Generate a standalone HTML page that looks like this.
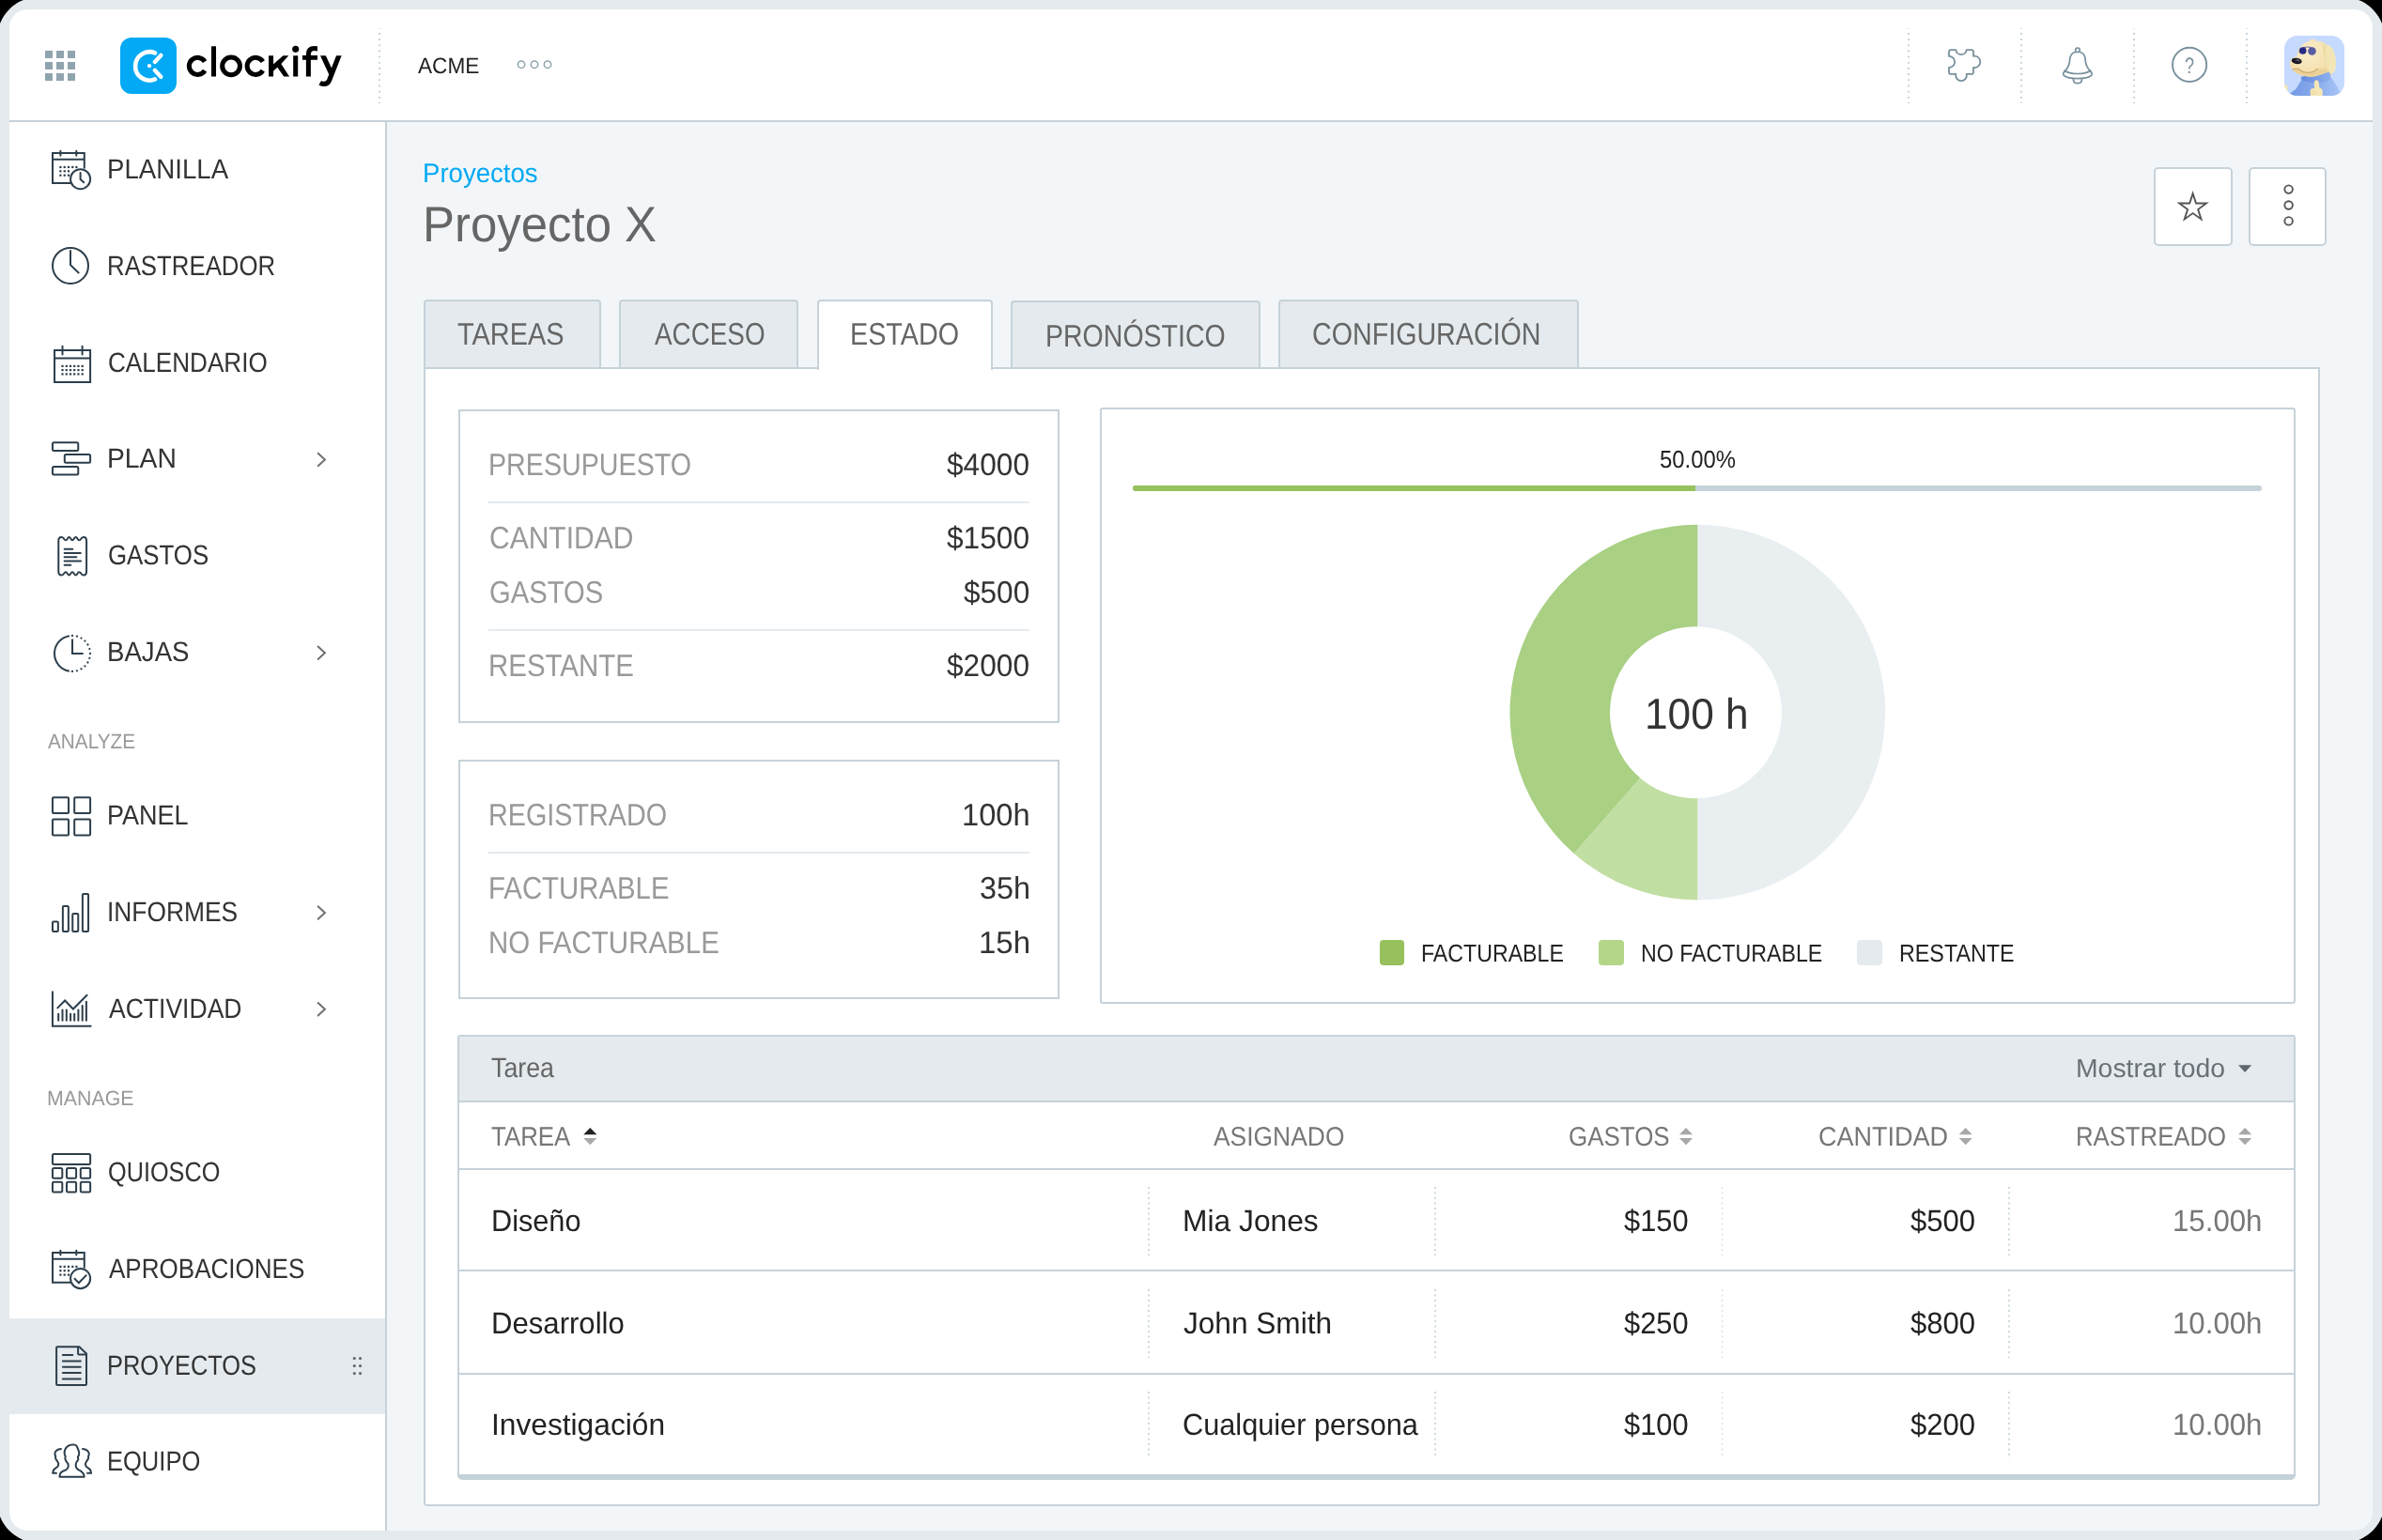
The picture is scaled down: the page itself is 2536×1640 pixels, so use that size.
<!DOCTYPE html>
<html><head><meta charset="utf-8"><title>Clockify</title>
<style>
html,body{margin:0;padding:0;background:#000;width:2536px;height:1640px;overflow:hidden}
body{width:2536px;height:1640px;position:relative;overflow:hidden;font-family:"Liberation Sans",sans-serif}
div,span,svg{position:absolute;display:block}
span{white-space:pre;transform-origin:0 0;text-rendering:geometricPrecision}
</style></head><body>
<div id="root" style="left:0;top:0;width:2536px;height:1640px;overflow:hidden;background:#000"><div style="left:-3px;top:-3px;width:2542px;height:1646px;background:#e4eaee;border-radius:44px"></div><div id="win" style="left:0;top:0;width:2536px;height:1640px;clip-path:inset(10px round 20px);background:#f2f6f8"><div style="left:10px;top:10px;width:2516px;height:118px;background:#fff"></div><div style="left:10px;top:128px;width:2516px;height:2px;background:#c6d2d9"></div><div style="left:10px;top:130px;width:400px;height:1500px;background:#fff"></div><div style="left:410.2px;top:130px;width:2px;height:1500px;background:#c6d2d9"></div><div style="left:10px;top:1403.8px;width:400.2px;height:102.1px;background:#e4eaee"></div><div style="left:48px;top:54px;width:8px;height:8px;background:#90a4ae"></div><div style="left:48px;top:66px;width:8px;height:8px;background:#90a4ae"></div><div style="left:48px;top:78px;width:8px;height:8px;background:#90a4ae"></div><div style="left:60px;top:54px;width:8px;height:8px;background:#90a4ae"></div><div style="left:60px;top:66px;width:8px;height:8px;background:#90a4ae"></div><div style="left:60px;top:78px;width:8px;height:8px;background:#90a4ae"></div><div style="left:72px;top:54px;width:8px;height:8px;background:#90a4ae"></div><div style="left:72px;top:66px;width:8px;height:8px;background:#90a4ae"></div><div style="left:72px;top:78px;width:8px;height:8px;background:#90a4ae"></div><div style="left:128px;top:40px;width:60px;height:60px;background:#03a9f4;border-radius:12px"></div><div style="left:403px;top:30px;width:2px;height:80px;background-image:linear-gradient(to bottom,#c3cfd8 0,#c3cfd8 2px,transparent 2px);background-size:2px 6.18px;background-position:0 -1.18px;background-repeat:repeat-y"></div><div style="left:2031px;top:30px;width:2px;height:80px;background-image:linear-gradient(to bottom,#c3cfd8 0,#c3cfd8 2px,transparent 2px);background-size:2px 6.18px;background-position:0 -1.18px;background-repeat:repeat-y"></div><div style="left:2151px;top:30px;width:2px;height:80px;background-image:linear-gradient(to bottom,#c3cfd8 0,#c3cfd8 2px,transparent 2px);background-size:2px 6.18px;background-position:0 -1.18px;background-repeat:repeat-y"></div><div style="left:2271px;top:30px;width:2px;height:80px;background-image:linear-gradient(to bottom,#c3cfd8 0,#c3cfd8 2px,transparent 2px);background-size:2px 6.18px;background-position:0 -1.18px;background-repeat:repeat-y"></div><div style="left:2391px;top:30px;width:2px;height:80px;background-image:linear-gradient(to bottom,#c3cfd8 0,#c3cfd8 2px,transparent 2px);background-size:2px 6.18px;background-position:0 -1.18px;background-repeat:repeat-y"></div><div style="left:2293px;top:177.5px;width:83.5px;height:84px;background:#fff;border:2px solid #c6d2d9;border-radius:5px;box-sizing:border-box"></div><div style="left:2393.7px;top:177.5px;width:83.5px;height:84px;background:#fff;border:2px solid #c6d2d9;border-radius:5px;box-sizing:border-box"></div><div style="left:450.6px;top:391.4px;width:2019.4px;height:1212.6px;background:#fff;border:2px solid #c6d2d9;box-sizing:border-box;border-radius:0 0 4px 4px"></div><div style="left:450.8px;top:319.1px;width:189.5px;height:74.3px;background:#e4eaee;border:2px solid #c6d2d9;box-sizing:border-box;border-radius:4px 4px 0 0"></div><div style="left:658.6px;top:319.1px;width:191.2px;height:74.3px;background:#e4eaee;border:2px solid #c6d2d9;box-sizing:border-box;border-radius:4px 4px 0 0"></div><div style="left:870.1px;top:319.1px;width:187.1px;height:74.5px;background:#fff;border:2px solid #c6d2d9;border-bottom:none;box-sizing:border-box;border-radius:4px 4px 0 0"></div><div style="left:1076.4px;top:320.3px;width:265.6px;height:73.1px;background:#e4eaee;border:2px solid #c6d2d9;box-sizing:border-box;border-radius:4px 4px 0 0"></div><div style="left:1360.5px;top:319.1px;width:320.5px;height:74.3px;background:#e4eaee;border:2px solid #c6d2d9;box-sizing:border-box;border-radius:4px 4px 0 0"></div><div style="left:488px;top:436px;width:640px;height:333.5px;background:#fff;border:2px solid #c6d2d9;box-sizing:border-box"></div><div style="left:488px;top:808.8px;width:640px;height:255.4px;background:#fff;border:2px solid #c6d2d9;box-sizing:border-box"></div><div style="left:1170.6px;top:434.4px;width:1273.4px;height:634.4px;background:#fff;border:2px solid #c6d2d9;box-sizing:border-box;border-radius:3px"></div><div style="left:520px;top:534px;width:576px;height:2px;background:#e4eaee"></div><div style="left:520px;top:670px;width:576px;height:2px;background:#e4eaee"></div><div style="left:520px;top:906.5px;width:576px;height:2px;background:#e4eaee"></div><div style="left:1206.4px;top:517.3px;width:1202px;height:6.2px;background:#c6d2d9;border-radius:3px"></div><div style="left:1206.4px;top:517.3px;width:598.2px;height:6.2px;background:#96c25e;border-radius:3px 0 0 3px"></div><div style="left:1468.7px;top:1001.2px;width:26.8px;height:26.6px;background:#96c15d;border-radius:4px"></div><div style="left:1702.1px;top:1001.2px;width:26.8px;height:26.6px;background:#b3d689;border-radius:4px"></div><div style="left:1977.2px;top:1001.2px;width:26.8px;height:26.6px;background:#e4eaee;border-radius:4px"></div><div style="left:487px;top:1102px;width:1957px;height:474px;background:#fff;border:2px solid #c6d2d9;border-bottom:6px solid #c6d2d9;box-sizing:border-box;border-radius:3px 3px 5px 5px"></div><div style="left:489px;top:1104px;width:1953px;height:68px;background:#e4eaee"></div><div style="left:489px;top:1172px;width:1953px;height:2px;background:#c6d2d9"></div><div style="left:489px;top:1244px;width:1953px;height:2px;background:#c6d2d9"></div><div style="left:489px;top:1352px;width:1953px;height:2px;background:#c6d2d9"></div><div style="left:489px;top:1462px;width:1953px;height:2px;background:#c6d2d9"></div><div style="left:1221.8px;top:1264px;width:1.8px;height:72.5px;background-image:linear-gradient(to bottom,#ccd7dd 0,#ccd7dd 1.7px,transparent 1.7px);background-size:1.8px 5.53px;background-position:0 0px;background-repeat:repeat-y"></div><div style="left:1527.3px;top:1264px;width:1.8px;height:72.5px;background-image:linear-gradient(to bottom,#ccd7dd 0,#ccd7dd 1.7px,transparent 1.7px);background-size:1.8px 5.53px;background-position:0 0px;background-repeat:repeat-y"></div><div style="left:1832.6px;top:1264px;width:1.8px;height:72.5px;background-image:linear-gradient(to bottom,#ccd7dd 0,#ccd7dd 1.7px,transparent 1.7px);background-size:1.8px 5.53px;background-position:0 0px;background-repeat:repeat-y"></div><div style="left:2138.1px;top:1264px;width:1.8px;height:72.5px;background-image:linear-gradient(to bottom,#ccd7dd 0,#ccd7dd 1.7px,transparent 1.7px);background-size:1.8px 5.53px;background-position:0 0px;background-repeat:repeat-y"></div><div style="left:1221.8px;top:1373px;width:1.8px;height:72.5px;background-image:linear-gradient(to bottom,#ccd7dd 0,#ccd7dd 1.7px,transparent 1.7px);background-size:1.8px 5.53px;background-position:0 0px;background-repeat:repeat-y"></div><div style="left:1527.3px;top:1373px;width:1.8px;height:72.5px;background-image:linear-gradient(to bottom,#ccd7dd 0,#ccd7dd 1.7px,transparent 1.7px);background-size:1.8px 5.53px;background-position:0 0px;background-repeat:repeat-y"></div><div style="left:1832.6px;top:1373px;width:1.8px;height:72.5px;background-image:linear-gradient(to bottom,#ccd7dd 0,#ccd7dd 1.7px,transparent 1.7px);background-size:1.8px 5.53px;background-position:0 0px;background-repeat:repeat-y"></div><div style="left:2138.1px;top:1373px;width:1.8px;height:72.5px;background-image:linear-gradient(to bottom,#ccd7dd 0,#ccd7dd 1.7px,transparent 1.7px);background-size:1.8px 5.53px;background-position:0 0px;background-repeat:repeat-y"></div><div style="left:1221.8px;top:1481.5px;width:1.8px;height:72.5px;background-image:linear-gradient(to bottom,#ccd7dd 0,#ccd7dd 1.7px,transparent 1.7px);background-size:1.8px 5.53px;background-position:0 0px;background-repeat:repeat-y"></div><div style="left:1527.3px;top:1481.5px;width:1.8px;height:72.5px;background-image:linear-gradient(to bottom,#ccd7dd 0,#ccd7dd 1.7px,transparent 1.7px);background-size:1.8px 5.53px;background-position:0 0px;background-repeat:repeat-y"></div><div style="left:1832.6px;top:1481.5px;width:1.8px;height:72.5px;background-image:linear-gradient(to bottom,#ccd7dd 0,#ccd7dd 1.7px,transparent 1.7px);background-size:1.8px 5.53px;background-position:0 0px;background-repeat:repeat-y"></div><div style="left:2138.1px;top:1481.5px;width:1.8px;height:72.5px;background-image:linear-gradient(to bottom,#ccd7dd 0,#ccd7dd 1.7px,transparent 1.7px);background-size:1.8px 5.53px;background-position:0 0px;background-repeat:repeat-y"></div><svg style="left:0;top:0" width="2536" height="1640" viewBox="0 0 2536 1640"><path d="M75.5,194.9 L56,194.9 L56,163 L89.8,163 L89.8,179.5" fill="none" stroke="#2d3e4b" stroke-width="2" stroke-linecap="butt" stroke-linejoin="miter"/><line x1="56" y1="169.8" x2="89.8" y2="169.8" stroke="#2d3e4b" stroke-width="2" stroke-linecap="butt"/><line x1="64.4" y1="160.8" x2="64.4" y2="165.7" stroke="#2d3e4b" stroke-width="2" stroke-linecap="round"/><line x1="81.3" y1="160.8" x2="81.3" y2="165.7" stroke="#2d3e4b" stroke-width="2" stroke-linecap="round"/><rect x="63.3" y="176.9" width="2.2" height="2.2" fill="#2d3e4b"/><rect x="67.6" y="176.9" width="2.2" height="2.2" fill="#2d3e4b"/><rect x="71.9" y="176.9" width="2.2" height="2.2" fill="#2d3e4b"/><rect x="76.2" y="176.9" width="2.2" height="2.2" fill="#2d3e4b"/><rect x="80.3" y="176.9" width="2.2" height="2.2" fill="#2d3e4b"/><rect x="63.3" y="181.2" width="2.2" height="2.2" fill="#2d3e4b"/><rect x="67.6" y="181.2" width="2.2" height="2.2" fill="#2d3e4b"/><rect x="71.9" y="181.2" width="2.2" height="2.2" fill="#2d3e4b"/><rect x="63.3" y="185.6" width="2.2" height="2.2" fill="#2d3e4b"/><rect x="67.6" y="185.6" width="2.2" height="2.2" fill="#2d3e4b"/><rect x="71.9" y="185.6" width="2.2" height="2.2" fill="#2d3e4b"/><circle cx="85.6" cy="190.7" r="10.55" fill="none" stroke="#2d3e4b" stroke-width="2"/><path d="M85.6,184.1 L85.6,190.9 L89.2,194.2" fill="none" stroke="#2d3e4b" stroke-width="2" stroke-linecap="round" stroke-linejoin="round"/><circle cx="75" cy="282.9" r="19" fill="none" stroke="#2d3e4b" stroke-width="2"/><path d="M75,266.3 L75,282.1 L84.2,291" fill="none" stroke="#2d3e4b" stroke-width="2" stroke-linecap="butt" stroke-linejoin="miter"/><rect x="58.04" y="373" width="38.06" height="34" rx="0" fill="none" stroke="#2d3e4b" stroke-width="2"/><line x1="58" y1="381.6" x2="96" y2="381.6" stroke="#2d3e4b" stroke-width="2" stroke-linecap="butt"/><line x1="66.5" y1="368.7" x2="66.5" y2="377.4" stroke="#2d3e4b" stroke-width="2" stroke-linecap="round"/><line x1="87.6" y1="368.7" x2="87.6" y2="377.4" stroke="#2d3e4b" stroke-width="2" stroke-linecap="round"/><rect x="65.4" y="388.8" width="2.2" height="2.2" fill="#2d3e4b"/><rect x="69.65" y="388.8" width="2.2" height="2.2" fill="#2d3e4b"/><rect x="73.9" y="388.8" width="2.2" height="2.2" fill="#2d3e4b"/><rect x="78.1" y="388.8" width="2.2" height="2.2" fill="#2d3e4b"/><rect x="82.35" y="388.8" width="2.2" height="2.2" fill="#2d3e4b"/><rect x="86.6" y="388.8" width="2.2" height="2.2" fill="#2d3e4b"/><rect x="65.4" y="393" width="2.2" height="2.2" fill="#2d3e4b"/><rect x="69.65" y="393" width="2.2" height="2.2" fill="#2d3e4b"/><rect x="73.9" y="393" width="2.2" height="2.2" fill="#2d3e4b"/><rect x="78.1" y="393" width="2.2" height="2.2" fill="#2d3e4b"/><rect x="82.35" y="393" width="2.2" height="2.2" fill="#2d3e4b"/><rect x="86.6" y="393" width="2.2" height="2.2" fill="#2d3e4b"/><rect x="65.4" y="397.3" width="2.2" height="2.2" fill="#2d3e4b"/><rect x="69.65" y="397.3" width="2.2" height="2.2" fill="#2d3e4b"/><rect x="73.9" y="397.3" width="2.2" height="2.2" fill="#2d3e4b"/><rect x="78.1" y="397.3" width="2.2" height="2.2" fill="#2d3e4b"/><rect x="82.35" y="397.3" width="2.2" height="2.2" fill="#2d3e4b"/><rect x="86.6" y="397.3" width="2.2" height="2.2" fill="#2d3e4b"/><rect x="55.96" y="471.3" width="27.3" height="8.7" rx="1.5" fill="none" stroke="#2d3e4b" stroke-width="2"/><rect x="68.8" y="484" width="27.3" height="8.8" rx="1.5" fill="none" stroke="#2d3e4b" stroke-width="2"/><rect x="55.96" y="496.9" width="27.3" height="8.5" rx="1.5" fill="none" stroke="#2d3e4b" stroke-width="2"/><path d="M62.3,576 Q62.3,572 65.4,572 Q67.3,572 68.2,574 Q69.2,575.3 69.9,575.3 Q71.0,575.3 71.9,573.6 Q72.8,572 73.5,572 Q74.3,572 75.2,573.6 Q76.2,575.3 77.0,575.3 Q77.9,575.3 78.9,573.6 Q79.8,572 80.6,572 Q81.5,572 82.4,573.6 Q83.4,575.3 84.3,575.3 Q85.3,575.3 86.2,574 Q87.1,572 89.0,572 Q92.1,572 92.1,576 L92.1,608.4 Q92.1,612.4 89.0,612.4 Q87.1,612.4 86.2,610.6 Q85.3,609.2 84.3,609.2 Q83.4,609.2 82.4,610.9 Q81.5,612.4 80.6,612.4 Q79.8,612.4 78.9,610.9 Q77.9,609.2 77.0,609.2 Q76.2,609.2 75.2,610.9 Q74.3,612.4 73.5,612.4 Q72.8,612.4 71.9,610.9 Q71.0,609.2 69.9,609.2 Q69.2,609.2 68.2,610.6 Q67.3,612.4 65.4,612.4 Q62.3,612.4 62.3,608.4 Z" fill="none" stroke="#2d3e4b" stroke-width="2" stroke-linecap="round" stroke-linejoin="round"/><line x1="68.6" y1="584.8" x2="77.3" y2="584.8" stroke="#2d3e4b" stroke-width="2" stroke-linecap="round"/><line x1="68.6" y1="589" x2="85.8" y2="589" stroke="#2d3e4b" stroke-width="2" stroke-linecap="round"/><line x1="68.6" y1="593.2" x2="81.4" y2="593.2" stroke="#2d3e4b" stroke-width="2" stroke-linecap="round"/><line x1="68.6" y1="597.5" x2="86" y2="597.5" stroke="#2d3e4b" stroke-width="2" stroke-linecap="round"/><line x1="68.6" y1="601.8" x2="75.3" y2="601.8" stroke="#2d3e4b" stroke-width="2" stroke-linecap="round"/><path d="M73.86,677.26 A19,19 0 0 0 73.86,714.74" fill="none" stroke="#2d3e4b" stroke-width="2" stroke-linecap="butt" stroke-linejoin="round"/><circle cx="77" cy="677" r="1.15" fill="#2d3e4b"/><circle cx="81.92" cy="677.65" r="1.15" fill="#2d3e4b"/><circle cx="86.5" cy="679.55" r="1.15" fill="#2d3e4b"/><circle cx="90.44" cy="682.56" r="1.15" fill="#2d3e4b"/><circle cx="93.45" cy="686.5" r="1.15" fill="#2d3e4b"/><circle cx="95.35" cy="691.08" r="1.15" fill="#2d3e4b"/><circle cx="96" cy="696" r="1.15" fill="#2d3e4b"/><circle cx="95.35" cy="700.92" r="1.15" fill="#2d3e4b"/><circle cx="93.45" cy="705.5" r="1.15" fill="#2d3e4b"/><circle cx="90.44" cy="709.44" r="1.15" fill="#2d3e4b"/><circle cx="86.5" cy="712.45" r="1.15" fill="#2d3e4b"/><circle cx="81.92" cy="714.35" r="1.15" fill="#2d3e4b"/><circle cx="77" cy="715" r="1.15" fill="#2d3e4b"/><path d="M77,680.5 L77,696 L88.6,696" fill="none" stroke="#2d3e4b" stroke-width="2" stroke-linecap="butt" stroke-linejoin="miter"/><rect x="55.96" y="849.2" width="17.07" height="16.9" rx="1" fill="none" stroke="#2d3e4b" stroke-width="2"/><rect x="55.96" y="872.4" width="17.07" height="17.1" rx="1" fill="none" stroke="#2d3e4b" stroke-width="2"/><rect x="79.2" y="849.2" width="16.9" height="16.9" rx="1" fill="none" stroke="#2d3e4b" stroke-width="2"/><rect x="79.2" y="872.4" width="16.9" height="17.1" rx="1" fill="none" stroke="#2d3e4b" stroke-width="2"/><rect x="55.96" y="981.5" width="5.9" height="10.6" rx="1" fill="none" stroke="#2d3e4b" stroke-width="2"/><rect x="66.87" y="965" width="6" height="27.1" rx="1" fill="none" stroke="#2d3e4b" stroke-width="2"/><rect x="77.26" y="973.1" width="6" height="19" rx="1" fill="none" stroke="#2d3e4b" stroke-width="2"/><rect x="87.9" y="952" width="6.16" height="40.1" rx="1" fill="none" stroke="#2d3e4b" stroke-width="2"/><path d="M55.95,1056.3 L55.95,1092.8 L96.6,1092.8" fill="none" stroke="#2d3e4b" stroke-width="2" stroke-linecap="round" stroke-linejoin="miter"/><line x1="62.2" y1="1079.7" x2="62.2" y2="1086.7" stroke="#2d3e4b" stroke-width="2" stroke-linecap="round"/><line x1="66.5" y1="1075.5" x2="66.5" y2="1086.7" stroke="#2d3e4b" stroke-width="2" stroke-linecap="round"/><line x1="70.8" y1="1075.5" x2="70.8" y2="1086.7" stroke="#2d3e4b" stroke-width="2" stroke-linecap="round"/><line x1="75.1" y1="1079.7" x2="75.1" y2="1086.7" stroke="#2d3e4b" stroke-width="2" stroke-linecap="round"/><line x1="79.2" y1="1079.7" x2="79.2" y2="1086.7" stroke="#2d3e4b" stroke-width="2" stroke-linecap="round"/><line x1="83.4" y1="1075.5" x2="83.4" y2="1086.7" stroke="#2d3e4b" stroke-width="2" stroke-linecap="round"/><line x1="87.7" y1="1071.1" x2="87.7" y2="1086.7" stroke="#2d3e4b" stroke-width="2" stroke-linecap="round"/><line x1="91.9" y1="1066.7" x2="91.9" y2="1086.7" stroke="#2d3e4b" stroke-width="2" stroke-linecap="round"/><path d="M61.3,1073.4 L69.1,1065.5 L77.9,1074.5 L92.6,1059.8" fill="none" stroke="#2d3e4b" stroke-width="2" stroke-linecap="round" stroke-linejoin="miter"/><rect x="55.96" y="1228.9" width="40.18" height="11" rx="1.5" fill="none" stroke="#2d3e4b" stroke-width="2"/><rect x="55.96" y="1244" width="10.34" height="10.7" rx="1.5" fill="none" stroke="#2d3e4b" stroke-width="2"/><rect x="71" y="1244" width="10.1" height="10.7" rx="1.5" fill="none" stroke="#2d3e4b" stroke-width="2"/><rect x="85.8" y="1244" width="10.34" height="10.7" rx="1.5" fill="none" stroke="#2d3e4b" stroke-width="2"/><rect x="55.96" y="1258.8" width="10.34" height="10.6" rx="1.5" fill="none" stroke="#2d3e4b" stroke-width="2"/><rect x="71" y="1258.8" width="10.1" height="10.6" rx="1.5" fill="none" stroke="#2d3e4b" stroke-width="2"/><rect x="85.8" y="1258.8" width="10.34" height="10.6" rx="1.5" fill="none" stroke="#2d3e4b" stroke-width="2"/><path d="M75.5,1365.8 L56,1365.8 L56,1333.9 L89.8,1333.9 L89.8,1350.4" fill="none" stroke="#2d3e4b" stroke-width="2" stroke-linecap="butt" stroke-linejoin="miter"/><line x1="56" y1="1340.7" x2="89.8" y2="1340.7" stroke="#2d3e4b" stroke-width="2" stroke-linecap="butt"/><line x1="64.4" y1="1331.7" x2="64.4" y2="1336.6" stroke="#2d3e4b" stroke-width="2" stroke-linecap="round"/><line x1="81.3" y1="1331.7" x2="81.3" y2="1336.6" stroke="#2d3e4b" stroke-width="2" stroke-linecap="round"/><rect x="63.3" y="1347.8" width="2.2" height="2.2" fill="#2d3e4b"/><rect x="67.6" y="1347.8" width="2.2" height="2.2" fill="#2d3e4b"/><rect x="71.9" y="1347.8" width="2.2" height="2.2" fill="#2d3e4b"/><rect x="76.2" y="1347.8" width="2.2" height="2.2" fill="#2d3e4b"/><rect x="80.3" y="1347.8" width="2.2" height="2.2" fill="#2d3e4b"/><rect x="63.3" y="1352.1" width="2.2" height="2.2" fill="#2d3e4b"/><rect x="67.6" y="1352.1" width="2.2" height="2.2" fill="#2d3e4b"/><rect x="71.9" y="1352.1" width="2.2" height="2.2" fill="#2d3e4b"/><rect x="63.3" y="1356.5" width="2.2" height="2.2" fill="#2d3e4b"/><rect x="67.6" y="1356.5" width="2.2" height="2.2" fill="#2d3e4b"/><rect x="71.9" y="1356.5" width="2.2" height="2.2" fill="#2d3e4b"/><circle cx="85.6" cy="1361.6" r="10.55" fill="none" stroke="#2d3e4b" stroke-width="2"/><path d="M78.9,1361.1 L83.9,1366.2 L92.2,1357.6" fill="none" stroke="#2d3e4b" stroke-width="2" stroke-linecap="butt" stroke-linejoin="miter"/><path d="M61.1,1434.2 L84.4,1434.2 L92.0,1441.4 L92.0,1473.9 Q92.0,1474.9 91,1474.9 L61.1,1474.9 Q60.1,1474.9 60.1,1473.9 L60.1,1435.2 Q60.1,1434.2 61.1,1434.2 Z" fill="none" stroke="#2d3e4b" stroke-width="2" stroke-linecap="round" stroke-linejoin="round"/><path d="M83.1,1434.5 L83.1,1441.5 Q83.1,1442.5 84.1,1442.5 L92.0,1442.5" fill="none" stroke="#2d3e4b" stroke-width="2" stroke-linecap="butt" stroke-linejoin="round"/><line x1="66.9" y1="1443" x2="77.3" y2="1443" stroke="#2d3e4b" stroke-width="2" stroke-linecap="round"/><line x1="66.9" y1="1449.4" x2="85.8" y2="1449.4" stroke="#2d3e4b" stroke-width="2" stroke-linecap="round"/><line x1="66.9" y1="1455.7" x2="85.8" y2="1455.7" stroke="#2d3e4b" stroke-width="2" stroke-linecap="round"/><line x1="66.9" y1="1462" x2="85.8" y2="1462" stroke="#2d3e4b" stroke-width="2" stroke-linecap="round"/><line x1="66.9" y1="1468.4" x2="85.8" y2="1468.4" stroke="#2d3e4b" stroke-width="2" stroke-linecap="round"/><path d="M63.48,1572.82 C63.59,1572.23 63.57,1570.31 64.16,1569.29 C64.74,1568.26 65.97,1567.35 67.01,1566.69 C68.05,1566.02 69.48,1565.98 70.39,1565.29 C71.3,1564.59 72.12,1563.55 72.47,1562.53 C72.81,1561.51 72.81,1560.24 72.47,1559.16 C72.12,1558.07 70.91,1556.99 70.39,1556.04 C69.87,1555.09 69.48,1554.31 69.35,1553.44 C69.22,1552.58 69.72,1551.71 69.61,1550.84 C69.5,1549.98 68.76,1549.37 68.68,1548.25 C68.59,1547.12 68.59,1545.39 69.09,1544.09 C69.59,1542.79 70.56,1541.36 71.69,1540.45 C72.81,1539.55 74.55,1538.94 75.84,1538.64 C77.14,1538.33 78.53,1538.42 79.48,1538.64 C80.43,1538.85 80.95,1539.16 81.56,1539.94 C82.16,1540.71 82.68,1542.19 83.12,1543.31 C83.55,1544.44 84.03,1545.61 84.16,1546.69 C84.29,1547.77 84.11,1548.98 83.9,1549.81 C83.68,1550.63 82.96,1550.89 82.86,1551.62 C82.75,1552.36 83.45,1553.4 83.27,1554.22 C83.1,1555.04 82.23,1555.74 81.82,1556.56 C81.4,1557.38 80.91,1558.2 80.78,1559.16 C80.65,1560.11 80.65,1561.29 81.04,1562.27 C81.43,1563.25 82.21,1564.25 83.12,1565.03 C84.03,1565.81 85.5,1566.11 86.49,1566.95 C87.49,1567.79 88.57,1569.09 89.09,1570.06 C89.61,1571.04 89.52,1572.36 89.61,1572.82 L63.48,1572.82 Z" fill="none" stroke="#2d3e4b" stroke-width="2" stroke-linecap="round" stroke-linejoin="round"/><path d="M65.71,1543.05 C65.15,1543.12 63.38,1543.08 62.34,1543.47 C61.3,1543.86 60.13,1544.59 59.48,1545.39 C58.83,1546.19 58.5,1547.34 58.44,1548.25 C58.38,1549.16 58.97,1549.98 59.12,1550.84 C59.26,1551.71 59.05,1552.62 59.32,1553.44 C59.6,1554.26 60.29,1554.91 60.78,1555.78 C61.26,1556.65 62.1,1557.68 62.23,1558.64 C62.36,1559.59 62.02,1560.71 61.56,1561.49 C61.1,1562.27 60.22,1562.66 59.48,1563.31 C58.74,1563.96 57.71,1564.48 57.14,1565.39 C56.58,1566.3 56.28,1568.2 56.1,1568.77 L60.78,1568.77" fill="none" stroke="#2d3e4b" stroke-width="2" stroke-linecap="butt" stroke-linejoin="round"/><path d="M87.27,1543.05 C87.84,1543.12 89.61,1543.08 90.65,1543.47 C91.69,1543.86 92.81,1544.59 93.51,1545.39 C94.2,1546.19 94.7,1547.34 94.81,1548.25 C94.91,1549.16 94.28,1549.98 94.13,1550.84 C93.98,1551.71 94.2,1552.62 93.92,1553.44 C93.65,1554.26 92.95,1554.91 92.47,1555.78 C91.98,1556.65 91.14,1557.68 91.01,1558.64 C90.88,1559.59 91.23,1560.71 91.69,1561.49 C92.15,1562.27 93.03,1562.66 93.77,1563.31 C94.5,1563.96 95.54,1564.48 96.1,1565.39 C96.67,1566.3 96.97,1568.2 97.14,1568.77 L92.21,1568.77" fill="none" stroke="#2d3e4b" stroke-width="2" stroke-linecap="butt" stroke-linejoin="round"/><path d="M338.1,482.2 L345.9,489.5 L338.1,496.8" fill="none" stroke="#707070" stroke-width="2" stroke-linecap="butt" stroke-linejoin="miter"/><path d="M338.1,687.9 L345.9,695.2 L338.1,702.5" fill="none" stroke="#707070" stroke-width="2" stroke-linecap="butt" stroke-linejoin="miter"/><path d="M338.1,964.7 L345.9,972 L338.1,979.3" fill="none" stroke="#707070" stroke-width="2" stroke-linecap="butt" stroke-linejoin="miter"/><path d="M338.1,1067.5 L345.9,1074.8 L338.1,1082.1" fill="none" stroke="#707070" stroke-width="2" stroke-linecap="butt" stroke-linejoin="miter"/><circle cx="377.3" cy="1446.6" r="1.55" fill="#63686c"/><circle cx="377.3" cy="1454.6" r="1.55" fill="#63686c"/><circle cx="377.3" cy="1462.6" r="1.55" fill="#63686c"/><circle cx="383.5" cy="1446.6" r="1.55" fill="#63686c"/><circle cx="383.5" cy="1454.6" r="1.55" fill="#63686c"/><circle cx="383.5" cy="1462.6" r="1.55" fill="#63686c"/><circle cx="555" cy="68.7" r="3.7" fill="none" stroke="#90a4ae" stroke-width="1.5"/><circle cx="569" cy="68.7" r="3.7" fill="none" stroke="#90a4ae" stroke-width="1.5"/><circle cx="583" cy="68.7" r="3.7" fill="none" stroke="#90a4ae" stroke-width="1.5"/><path d="M2077.2,53.1 L2082.3,53.1 A5.75,5.75 0 0 0 2093.7,53.1 L2098.8,53.1 Q2101.0,53.1 2101.0,55.3 L2101.0,59.8 A6.2,6.2 0 1 1 2101.0,72 L2101.0,76.7 Q2101.0,78.9 2098.8,78.9 L2093.7,78.9 A5.85,5.85 0 1 1 2082.3,78.9 L2077.2,78.9 Q2075.0,78.9 2075.0,76.7 L2075.0,72 A6.1,6.1 0 0 0 2075.0,59.8 L2075.0,55.3 Q2075.0,53.1 2077.2,53.1 Z" fill="none" stroke="#78909c" stroke-width="1.8" stroke-linecap="round" stroke-linejoin="round"/><circle cx="2211.9" cy="53.3" r="2.3" fill="none" stroke="#78909c" stroke-width="1.6"/><path d="M2209.7,55.3 C2205.4,56.5 2203.6,60.5 2203.5,64.5 C2203.3,70 2201.4,72.5 2198.1,76.2 C2196.3,78 2196.1,79.5 2197.7,80.8 C2202.9,84.6 2220.9,84.6 2226.1,80.8 C2227.7,79.5 2227.5,78 2225.7,76.2 C2222.4,72.5 2220.5,70 2220.3,64.5 C2220.2,60.5 2218.4,56.5 2214.1,55.3" fill="none" stroke="#78909c" stroke-width="1.7" stroke-linecap="round" stroke-linejoin="round"/><path d="M2198,75.2 C2203.9,79.6 2219.9,79.6 2225.8,75.2" fill="none" stroke="#78909c" stroke-width="1.7" stroke-linecap="round" stroke-linejoin="round"/><path d="M2207.3,84.2 C2207.5,90.2 2216.3,90.2 2216.5,84.2" fill="none" stroke="#78909c" stroke-width="1.7" stroke-linecap="round" stroke-linejoin="round"/><circle cx="2331.1" cy="68.9" r="18.1" fill="none" stroke="#78909c" stroke-width="1.9"/><path d="M2334.6,206.1 L2338.04,216.47 L2348.96,216.53 L2340.16,223.01 L2343.48,233.42 L2334.6,227.05 L2325.72,233.42 L2329.04,223.01 L2320.24,216.53 L2331.16,216.47 Z" fill="none" stroke="#555555" stroke-width="1.9" stroke-linecap="butt" stroke-linejoin="miter"/><circle cx="2436.6" cy="201.6" r="4.25" fill="none" stroke="#555555" stroke-width="1.9"/><circle cx="2436.6" cy="218.5" r="4.25" fill="none" stroke="#555555" stroke-width="1.9"/><circle cx="2436.6" cy="235.4" r="4.25" fill="none" stroke="#555555" stroke-width="1.9"/><path d="M164.99,56.31 A15.2,15.2 0 1 0 164.99,84.49" fill="none" stroke="#fff" stroke-width="4.6" stroke-linecap="round"/><line x1="164.8" y1="66" x2="171.3" y2="58.9" stroke="#fff" stroke-width="4.4" stroke-linecap="round"/><line x1="164.8" y1="74.8" x2="171.3" y2="81.8" stroke="#fff" stroke-width="4.4" stroke-linecap="round"/><circle cx="159" cy="70.1" r="2.2" fill="#fff"/><g transform="translate(195,42) scale(0.073888)" fill="none" stroke="#000" stroke-width="68"><path d="M311.9,320.1 A122,122 0 1 0 311.9,447.9"/><line x1="440" y1="97" x2="440" y2="535"/><circle cx="691" cy="384" r="127"/><path d="M1147.9,320.1 A122,122 0 1 0 1147.9,447.9"/><line x1="1266" y1="232" x2="1266" y2="535"/><path d="M1298,357 L1440,232 L1520,232 L1412,352 L1530,535 L1450,535 L1358,402 L1298,457 Z" fill="#000" stroke="none"/><line x1="1620" y1="232" x2="1620" y2="535"/><circle cx="1620" cy="140" r="48" fill="#000" stroke="none"/><clipPath id="cf"><rect x="1700" y="0" width="235" height="600"/></clipPath><clipPath id="cy"><rect x="1900" y="232" width="500" height="500"/></clipPath><path d="M1805,535 L1805,215 C1805,152 1842,128 1890,128 C1910,128 1930,132 1960,142" clip-path="url(#cf)"/><line x1="1718" y1="263" x2="1935" y2="263" stroke-width="63"/><g clip-path="url(#cy)"><path d="M2264.6,182 L2104,592 C2088,630 2058,642 2030,642 C2006,642 1986,634 1972,626" stroke-width="70"/><path d="M1992,182 L2138,500" stroke-width="72"/></g></g><path d="M1807.3,758.6 L1807.3,558.8 A199.8,199.8 0 0 1 1807.3,958.4 Z" fill="#e9eef1"/><path d="M1807.3,758.6 L1807.3,958.4 A199.8,199.8 0 0 1 1675.69,908.93 Z" fill="#c1dea3"/><path d="M1807.3,758.6 L1675.69,908.93 A199.8,199.8 0 0 1 1807.3,558.8 Z" fill="#a9d083"/><circle cx="1805.5" cy="758.8" r="91.5" fill="#fff"/><path d="M621.2,1208.3 L628.3,1201 L635.4,1208.3 Z" fill="#222222"/><path d="M621.2,1212 L628.3,1219.3 L635.4,1212 Z" fill="#aaaaaa"/><path d="M1787.9,1208.3 L1795,1201 L1802.1,1208.3 Z" fill="#a8a8a8"/><path d="M1787.9,1212 L1795,1219.3 L1802.1,1212 Z" fill="#a8a8a8"/><path d="M2085.6,1208.3 L2092.7,1201 L2099.8,1208.3 Z" fill="#a8a8a8"/><path d="M2085.6,1212 L2092.7,1219.3 L2099.8,1212 Z" fill="#a8a8a8"/><path d="M2383,1208.3 L2390.1,1201 L2397.2,1208.3 Z" fill="#a8a8a8"/><path d="M2383,1212 L2390.1,1219.3 L2397.2,1212 Z" fill="#a8a8a8"/><path d="M2383,1134.2 L2397.2,1134.2 L2390.1,1141.9 Z" fill="#60676c"/><defs><clipPath id="avc"><rect x="0" y="0" width="64" height="64" rx="14"/></clipPath><linearGradient id="hood" x1="0" y1="0" x2="1" y2="0"><stop offset="0" stop-color="#6f97e3"/><stop offset="0.5" stop-color="#86a9ea"/><stop offset="1" stop-color="#aac6f6"/></linearGradient><linearGradient id="collar" x1="0" y1="0" x2="1" y2="0"><stop offset="0" stop-color="#6189dc"/><stop offset="1" stop-color="#8fb0ee"/></linearGradient><radialGradient id="head" cx="0.45" cy="0.35" r="0.75"><stop offset="0" stop-color="#fbeecb"/><stop offset="0.7" stop-color="#f5e1b0"/><stop offset="1" stop-color="#e8c98c"/></radialGradient><linearGradient id="ear" x1="0" y1="0" x2="1" y2="0"><stop offset="0" stop-color="#e6d49a"/><stop offset="0.25" stop-color="#f1e4b2"/><stop offset="1" stop-color="#f3e7b8"/></linearGradient><radialGradient id="nose" cx="0.6" cy="0.35" r="0.7"><stop offset="0" stop-color="#6b6a7c"/><stop offset="0.35" stop-color="#24222f"/><stop offset="1" stop-color="#0d0c14"/></radialGradient></defs><g transform="translate(2432,38)"><g clip-path="url(#avc)"><rect x="0" y="0" width="64" height="64" fill="#c6daff"/><path d="M-1,51 C2,51.5 3.6,53 3.8,56 C4,58.5 2.5,60 -1,60 Z" fill="#f3e2b0"/><path d="M2,65 L8,60 L12.2,57.1 L16.9,49.4 L19,46.5 L30,44 L48,42 L54.3,50.9 L59,59.2 L61,65 Z" fill="url(#hood)"/><path d="M36,30 L52,30 L50,42 L38,44 Z" fill="#ecd39a"/><path d="M17.9,44.2 C22,41.5 30,43.5 36,42.5 C41,41.5 45,39 47.2,38.6 C49.6,40.5 49.8,44 48.6,47.3 C43,50 36,50.5 32,50 C27,49.6 22,48.5 19.2,47.4 C18,46.5 17.5,45.2 17.9,44.2 Z" fill="url(#collar)"/><path d="M14.3,18.2 C16,12 21,7 27,5.6 C27.5,3.5 29.5,2.8 31,4 C33,3.6 34,4.8 33.6,6 C38,5.2 43,7 46,11 C49,16 49,30 45,36 C41,41 33,44.5 25.5,43.6 C19,42.8 12,40.5 9.3,36.6 C6.5,34.5 5.5,31 6.2,28 C6.8,25 10,22.5 13.3,22.3 C13.4,20.8 13.8,19.4 14.3,18.2 Z" fill="url(#head)"/><path d="M9.3,36.6 C11,35 13.8,34.8 15.6,36.2 C18,38 21,39.2 24.5,39.4 C28.5,39.6 32.5,38 35.4,35 C38,35.6 41,35.4 44.8,36.2 C41,41 33,44.5 25.5,43.6 C19,42.8 12,40.5 9.3,36.6 Z" fill="#ecd199"/><path d="M14.3,18.2 C14.8,16 16,13.4 17.6,11.6 C16.6,14.4 16.2,16.6 16.4,19.4 Z" fill="#e6cf98"/><path d="M9.1,36.4 C10.5,34.8 13.5,34.6 15.5,36 C17.5,37.6 20,38.8 24,39.2 C28,39.6 32.5,38 35.2,35.2" fill="none" stroke="#c9a567" stroke-width="1.1" stroke-linecap="round"/><path d="M41.3,9.9 C45,8.6 49,10 51.5,14 C54.5,19 55.6,27 54.6,34 C54,38 52.4,40.4 50.2,40 C47.6,39.6 45.8,36 44.6,32 C43,26.6 41.6,20 41.4,15 C41.3,13 41.2,11.4 41.3,9.9 Z" fill="url(#ear)"/><path d="M19.7,13 C23,11.6 27,11.8 30.5,13.2" fill="none" stroke="#2a2e8a" stroke-width="0.7"/><circle cx="19.7" cy="16" r="3.8" fill="#262b87"/><ellipse cx="29.5" cy="16.5" rx="4.3" ry="4.3" fill="#595ca2"/><ellipse cx="13.2" cy="26.9" rx="5.5" ry="3.2" fill="url(#nose)" transform="rotate(8 13.2 26.9)"/><path d="M32.2,56 C31.6,52 31.4,49.4 32.6,48 C33.8,46.6 36,47.2 36.6,49.4 C37.2,52 37.2,54.4 37.6,55.8 C39.6,56 40.8,57.4 40.8,59.6 L40.8,65 L28,65 L27.6,58.6 C27.6,57 29,55.8 32.2,56 Z" fill="#f6e6b6"/><path d="M28,59.5 L33.5,59.3 M28.2,62.2 L33.6,62" stroke="#e3cc94" stroke-width="0.6" fill="none"/></g></g></svg><div id="tx" style="left:0;top:0;width:2536px;height:1640px;will-change:transform"><span style="left:114.13px;top:166px;font-size:29.5px;line-height:29.5px;color:#333333;font-weight:400;transform:scaleX(0.9370)">PLANILLA</span><span style="left:114.25px;top:269px;font-size:29.5px;line-height:29.5px;color:#333333;font-weight:400;transform:scaleX(0.8746)">RASTREADOR</span><span style="left:115.12px;top:372px;font-size:29.5px;line-height:29.5px;color:#333333;font-weight:400;transform:scaleX(0.8849)">CALENDARIO</span><span style="left:114.08px;top:474px;font-size:29.5px;line-height:29.5px;color:#333333;font-weight:400;transform:scaleX(0.9580)">PLAN</span><span style="left:115.12px;top:577px;font-size:29.5px;line-height:29.5px;color:#333333;font-weight:400;transform:scaleX(0.8755)">GASTOS</span><span style="left:114.13px;top:680px;font-size:29.5px;line-height:29.5px;color:#333333;font-weight:400;transform:scaleX(0.9363)">BAJAS</span><span style="left:114.17px;top:854px;font-size:29.5px;line-height:29.5px;color:#333333;font-weight:400;transform:scaleX(0.9160)">PANEL</span><span style="left:114.21px;top:957px;font-size:29.5px;line-height:29.5px;color:#333333;font-weight:400;transform:scaleX(0.8940)">INFORMES</span><span style="left:116px;top:1060px;font-size:29.5px;line-height:29.5px;color:#333333;font-weight:400;transform:scaleX(0.8991)">ACTIVIDAD</span><span style="left:115.14px;top:1234px;font-size:29.5px;line-height:29.5px;color:#333333;font-weight:400;transform:scaleX(0.8568)">QUIOSCO</span><span style="left:116px;top:1337px;font-size:29.5px;line-height:29.5px;color:#333333;font-weight:400;transform:scaleX(0.8824)">APROBACIONES</span><span style="left:114.28px;top:1440px;font-size:29.5px;line-height:29.5px;color:#333333;font-weight:400;transform:scaleX(0.8609)">PROYECTOS</span><span style="left:114.27px;top:1542px;font-size:29.5px;line-height:29.5px;color:#333333;font-weight:400;transform:scaleX(0.8649)">EQUIPO</span><span style="left:51.3px;top:779px;font-size:22.1px;line-height:22.1px;color:#999999;font-weight:400;transform:scaleX(0.9399)">ANALYZE</span><span style="left:50.33px;top:1159px;font-size:22.1px;line-height:22.1px;color:#999999;font-weight:400;transform:scaleX(0.9658)">MANAGE</span><span style="left:444.6px;top:60px;font-size:23.7px;line-height:23.7px;color:#222222;font-weight:400;transform:scaleX(0.9551)">ACME</span><span style="left:449.57px;top:171px;font-size:28.6px;line-height:28.6px;color:#03a9f4;font-weight:400;transform:scaleX(0.9644)">Proyectos</span><span style="left:449.67px;top:213px;font-size:53.2px;line-height:53.2px;color:#666666;font-weight:400;transform:scaleX(0.9575)">Proyecto X</span><span style="left:486.6px;top:340px;font-size:33.2px;line-height:33.2px;color:#666666;font-weight:400;transform:scaleX(0.8716)">TAREAS</span><span style="left:696.6px;top:340px;font-size:33.2px;line-height:33.2px;color:#666666;font-weight:400;transform:scaleX(0.8389)">ACCESO</span><span style="left:905.27px;top:340px;font-size:33.2px;line-height:33.2px;color:#666666;font-weight:400;transform:scaleX(0.8660)">ESTADO</span><span style="left:1112.98px;top:342px;font-size:33.2px;line-height:33.2px;color:#666666;font-weight:400;transform:scaleX(0.8593)">PRONÓSTICO</span><span style="left:1397.14px;top:340px;font-size:33.2px;line-height:33.2px;color:#666666;font-weight:400;transform:scaleX(0.8634)">CONFIGURACIÓN</span><span style="left:520.17px;top:479px;font-size:33.2px;line-height:33.2px;color:#999999;font-weight:400;transform:scaleX(0.8634)">PRESUPUESTO</span><span style="left:520.5px;top:557px;font-size:33.2px;line-height:33.2px;color:#999999;font-weight:400;transform:scaleX(0.9042)">CANTIDAD</span><span style="left:520.52px;top:615px;font-size:33.2px;line-height:33.2px;color:#999999;font-weight:400;transform:scaleX(0.8807)">GASTOS</span><span style="left:520.43px;top:693px;font-size:33.2px;line-height:33.2px;color:#999999;font-weight:400;transform:scaleX(0.8867)">RESTANTE</span><span style="left:1007.7px;top:479px;font-size:33.2px;line-height:33.2px;color:#333333;font-weight:400;transform:scaleX(0.9539)">$4000</span><span style="left:1007.7px;top:557px;font-size:33.2px;line-height:33.2px;color:#333333;font-weight:400;transform:scaleX(0.9539)">$1500</span><span style="left:1025.5px;top:615px;font-size:33.2px;line-height:33.2px;color:#333333;font-weight:400;transform:scaleX(0.9513)">$500</span><span style="left:1007.7px;top:693px;font-size:33.2px;line-height:33.2px;color:#333333;font-weight:400;transform:scaleX(0.9539)">$2000</span><span style="left:519.57px;top:852px;font-size:33.2px;line-height:33.2px;color:#999999;font-weight:400;transform:scaleX(0.8665)">REGISTRADO</span><span style="left:519.53px;top:930px;font-size:33.2px;line-height:33.2px;color:#999999;font-weight:400;transform:scaleX(0.8845)">FACTURABLE</span><span style="left:519.52px;top:988px;font-size:33.2px;line-height:33.2px;color:#999999;font-weight:400;transform:scaleX(0.8889)">NO FACTURABLE</span><span style="left:1024.03px;top:852px;font-size:33.2px;line-height:33.2px;color:#333333;font-weight:400;transform:scaleX(0.9833)">100h</span><span style="left:1042.62px;top:930px;font-size:33.2px;line-height:33.2px;color:#333333;font-weight:400;transform:scaleX(0.9752)">35h</span><span style="left:1041.61px;top:988px;font-size:33.2px;line-height:33.2px;color:#333333;font-weight:400;transform:scaleX(0.9939)">15h</span><span style="left:1766.98px;top:476px;font-size:26.0px;line-height:26.0px;color:#222222;font-weight:400;transform:scaleX(0.9177)">50.00%</span><span style="left:1751.12px;top:737px;font-size:46.0px;line-height:46.0px;color:#333333;font-weight:400;transform:scaleX(0.9614)">100 h</span><span style="left:1513.24px;top:1002px;font-size:26.3px;line-height:26.3px;color:#222222;font-weight:400;transform:scaleX(0.8806)">FACTURABLE</span><span style="left:1746.94px;top:1002px;font-size:26.3px;line-height:26.3px;color:#222222;font-weight:400;transform:scaleX(0.8816)">NO FACTURABLE</span><span style="left:2022.03px;top:1002px;font-size:26.3px;line-height:26.3px;color:#222222;font-weight:400;transform:scaleX(0.8860)">RESTANTE</span><span style="left:523px;top:1123px;font-size:29.5px;line-height:29.5px;color:#666666;font-weight:400;transform:scaleX(0.9074)">Tarea</span><span style="left:2209.66px;top:1124px;font-size:27.8px;line-height:27.8px;color:#6a7176;font-weight:400;transform:scaleX(1.0197)">Mostrar todo</span><span style="left:523.3px;top:1197px;font-size:28.6px;line-height:28.6px;color:#777777;font-weight:400;transform:scaleX(0.9051)">TAREA</span><span style="left:1291.6px;top:1197px;font-size:28.6px;line-height:28.6px;color:#777777;font-weight:400;transform:scaleX(0.9238)">ASIGNADO</span><span style="left:1669.89px;top:1197px;font-size:28.6px;line-height:28.6px;color:#777777;font-weight:400;transform:scaleX(0.9076)">GASTOS</span><span style="left:1936.36px;top:1197px;font-size:28.6px;line-height:28.6px;color:#777777;font-weight:400;transform:scaleX(0.9446)">CANTIDAD</span><span style="left:2209.9px;top:1197px;font-size:28.6px;line-height:28.6px;color:#777777;font-weight:400;transform:scaleX(0.8992)">RASTREADO</span><span style="left:522.89px;top:1284px;font-size:32.2px;line-height:32.2px;color:#222222;font-weight:400;transform:scaleX(0.9528)">Diseño</span><span style="left:522.97px;top:1393px;font-size:32.2px;line-height:32.2px;color:#222222;font-weight:400;transform:scaleX(0.9667)">Desarrollo</span><span style="left:522.93px;top:1501px;font-size:32.2px;line-height:32.2px;color:#222222;font-weight:400;transform:scaleX(0.9849)">Investigación</span><span style="left:1258.83px;top:1284px;font-size:32.2px;line-height:32.2px;color:#222222;font-weight:400;transform:scaleX(0.9867)">Mia Jones</span><span style="left:1259.5px;top:1393px;font-size:32.2px;line-height:32.2px;color:#222222;font-weight:400;transform:scaleX(0.9817)">John Smith</span><span style="left:1259.45px;top:1501px;font-size:32.2px;line-height:32.2px;color:#222222;font-weight:400;transform:scaleX(0.9537)">Cualquier persona</span><span style="left:1728.6px;top:1284px;font-size:32.2px;line-height:32.2px;color:#222222;font-weight:400;transform:scaleX(0.9575)">$150</span><span style="left:1728.6px;top:1393px;font-size:32.2px;line-height:32.2px;color:#222222;font-weight:400;transform:scaleX(0.9575)">$250</span><span style="left:1728.6px;top:1501px;font-size:32.2px;line-height:32.2px;color:#222222;font-weight:400;transform:scaleX(0.9575)">$100</span><span style="left:2033.8px;top:1284px;font-size:32.2px;line-height:32.2px;color:#222222;font-weight:400;transform:scaleX(0.9646)">$500</span><span style="left:2033.8px;top:1393px;font-size:32.2px;line-height:32.2px;color:#222222;font-weight:400;transform:scaleX(0.9646)">$800</span><span style="left:2033.8px;top:1501px;font-size:32.2px;line-height:32.2px;color:#222222;font-weight:400;transform:scaleX(0.9646)">$200</span><span style="left:2312.66px;top:1284px;font-size:32.2px;line-height:32.2px;color:#777777;font-weight:400;transform:scaleX(0.9699)">15.00h</span><span style="left:2312.66px;top:1393px;font-size:32.2px;line-height:32.2px;color:#777777;font-weight:400;transform:scaleX(0.9699)">10.00h</span><span style="left:2312.66px;top:1501px;font-size:32.2px;line-height:32.2px;color:#777777;font-weight:400;transform:scaleX(0.9699)">10.00h</span><span style="left:2326.3px;top:59px;font-size:24.0px;line-height:24.0px;color:#78909c;font-weight:400;transform:scaleX(0.7538)">?</span></div></div></div>
</body></html>
